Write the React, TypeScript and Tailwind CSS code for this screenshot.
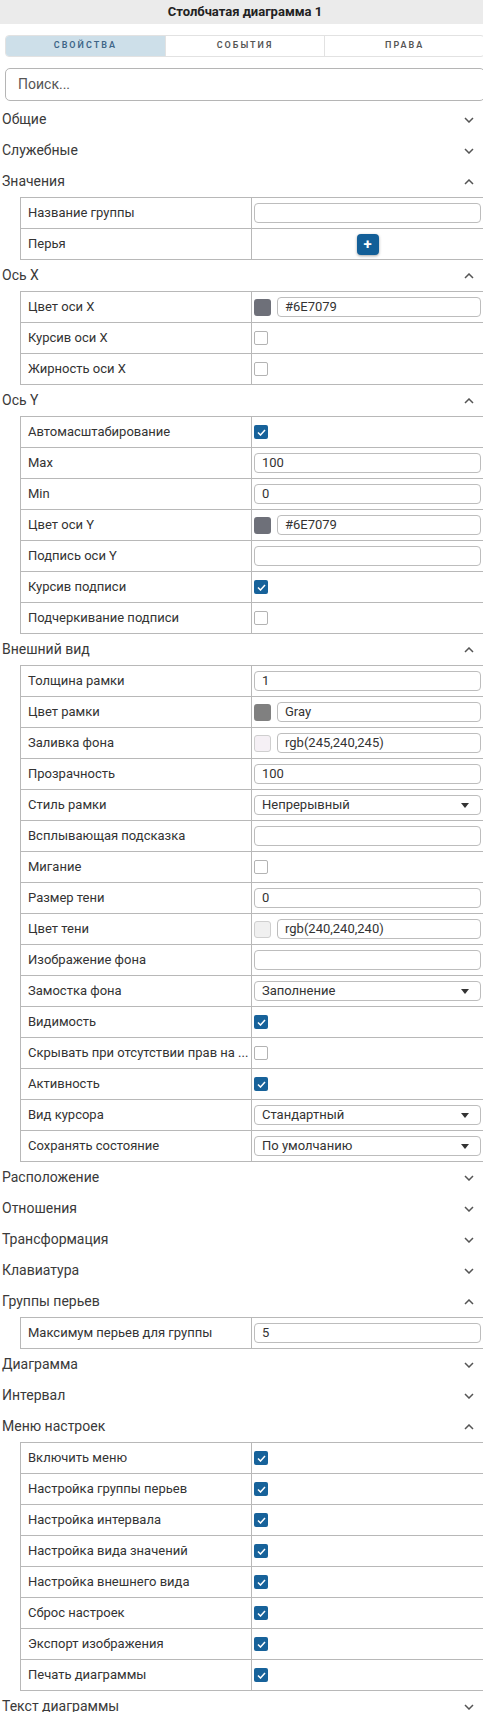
import { ReactNode } from 'react';

type Row =
  | { label: string; kind: 'input'; value?: string }
  | { label: string; kind: 'color'; value: string; swatch: string; light?: boolean }
  | { label: string; kind: 'check'; checked: boolean }
  | { label: string; kind: 'select'; value: string }
  | { label: string; kind: 'add' };

type Section = { title: string; rows?: Row[] };

const sections: Section[] = [
  { title: 'Общие' },
  { title: 'Служебные' },
  {
    title: 'Значения',
    rows: [
      { label: 'Название группы', kind: 'input' },
      { label: 'Перья', kind: 'add' },
    ],
  },
  {
    title: 'Ось X',
    rows: [
      { label: 'Цвет оси X', kind: 'color', value: '#6E7079', swatch: '#6E7079' },
      { label: 'Курсив оси X', kind: 'check', checked: false },
      { label: 'Жирность оси X', kind: 'check', checked: false },
    ],
  },
  {
    title: 'Ось Y',
    rows: [
      { label: 'Автомасштабирование', kind: 'check', checked: true },
      { label: 'Max', kind: 'input', value: '100' },
      { label: 'Min', kind: 'input', value: '0' },
      { label: 'Цвет оси Y', kind: 'color', value: '#6E7079', swatch: '#6E7079' },
      { label: 'Подпись оси Y', kind: 'input' },
      { label: 'Курсив подписи', kind: 'check', checked: true },
      { label: 'Подчеркивание подписи', kind: 'check', checked: false },
    ],
  },
  {
    title: 'Внешний вид',
    rows: [
      { label: 'Толщина рамки', kind: 'input', value: '1' },
      { label: 'Цвет рамки', kind: 'color', value: 'Gray', swatch: '#808080' },
      { label: 'Заливка фона', kind: 'color', value: 'rgb(245,240,245)', swatch: 'rgb(245,240,245)', light: true },
      { label: 'Прозрачность', kind: 'input', value: '100' },
      { label: 'Стиль рамки', kind: 'select', value: 'Непрерывный' },
      { label: 'Всплывающая подсказка', kind: 'input' },
      { label: 'Мигание', kind: 'check', checked: false },
      { label: 'Размер тени', kind: 'input', value: '0' },
      { label: 'Цвет тени', kind: 'color', value: 'rgb(240,240,240)', swatch: 'rgb(240,240,240)', light: true },
      { label: 'Изображение фона', kind: 'input' },
      { label: 'Замостка фона', kind: 'select', value: 'Заполнение' },
      { label: 'Видимость', kind: 'check', checked: true },
      // label is shortened by the app itself
      { label: 'Скрывать при отсутствии прав на ...', kind: 'check', checked: false },
      { label: 'Активность', kind: 'check', checked: true },
      { label: 'Вид курсора', kind: 'select', value: 'Стандартный' },
      { label: 'Сохранять состояние', kind: 'select', value: 'По умолчанию' },
    ],
  },
  { title: 'Расположение' },
  { title: 'Отношения' },
  { title: 'Трансформация' },
  { title: 'Клавиатура' },
  {
    title: 'Группы перьев',
    rows: [{ label: 'Максимум перьев для группы', kind: 'input', value: '5' }],
  },
  { title: 'Диаграмма' },
  { title: 'Интервал' },
  {
    title: 'Меню настроек',
    rows: [
      { label: 'Включить меню', kind: 'check', checked: true },
      { label: 'Настройка группы перьев', kind: 'check', checked: true },
      { label: 'Настройка интервала', kind: 'check', checked: true },
      { label: 'Настройка вида значений', kind: 'check', checked: true },
      { label: 'Настройка внешнего вида', kind: 'check', checked: true },
      { label: 'Сброс настроек', kind: 'check', checked: true },
      { label: 'Экспорт изображения', kind: 'check', checked: true },
      { label: 'Печать диаграммы', kind: 'check', checked: true },
    ],
  },
  { title: 'Текст диаграммы' },
];

const Chevron = ({ open }: { open: boolean }) => (
  <svg width="10" height="6" viewBox="0 0 10 6" className={open ? 'rotate-180' : ''}>
    <polyline points="1,1 5,5 9,1" fill="none" stroke="#555" strokeWidth="1.5" />
  </svg>
);

const Field = ({ children }: { children?: ReactNode }) => (
  <div className="flex h-[20px] flex-1 items-center rounded-[4px] border border-[#bdbdbd] px-[7px] text-[13px] text-[#333]">
    {children}
  </div>
);

const Checkbox = ({ checked }: { checked: boolean }) =>
  checked ? (
    <div className="flex h-[14px] w-[14px] items-center justify-center rounded-[2px] bg-[#17629a]">
      <svg width="9" height="7" viewBox="0 0 9 7">
        <polyline points="1,3.5 3.5,6 8,1" fill="none" stroke="#fff" strokeWidth="1.5" />
      </svg>
    </div>
  ) : (
    <div className="h-[14px] w-[14px] rounded-[2px] border-[1.5px] border-[#b3b3b3] bg-white" />
  );

const Value = ({ row }: { row: Row }) => {
  switch (row.kind) {
    case 'input':
      return <Field>{row.value}</Field>;
    case 'color':
      return (
        <div className="flex flex-1 items-center gap-[6px]">
          <div
            className={`h-[17px] w-[17px] shrink-0 rounded-[3px] ${row.light ? 'border border-[#cfcfcf]' : ''}`}
            style={{ backgroundColor: row.swatch }}
          />
          <Field>{row.value}</Field>
        </div>
      );
    case 'check':
      return <Checkbox checked={row.checked} />;
    case 'select':
      return (
        <Field>
          <span className="flex-1">{row.value}</span>
          <svg width="8" height="5" viewBox="0 0 8 5" className="mr-[4px]">
            <polygon points="0,0 8,0 4,5" fill="#333" />
          </svg>
        </Field>
      );
    case 'add':
      return (
        <div className="flex flex-1 justify-center">
          <div className="flex h-[21px] w-[22px] items-center justify-center rounded-[4px] bg-[#135f98] text-[15px] font-bold leading-none text-white shadow-[0_1px_3px_rgba(0,0,0,0.35)]">
            +
          </div>
        </div>
      );
  }
};

const PropTable = ({ rows }: { rows: Row[] }) => (
  <div className="ml-[20px] mr-[5px] border-x border-t border-[#b8b8b8]">
    {rows.map((row) => (
      <div key={row.label} className="grid h-[31px] grid-cols-[231px_1fr] border-b border-[#b8b8b8]">
        <div className="flex items-center whitespace-nowrap border-r border-[#b8b8b8] pl-[7px] text-[13px] text-[#333]">
          {row.label}
        </div>
        <div className="flex items-center pl-[2px] pr-[3px]">
          <Value row={row} />
        </div>
      </div>
    ))}
  </div>
);

export default function App() {
  return (
    <div className="w-[483px] overflow-hidden bg-white font-['Roboto',sans-serif]">
      <div className="w-[490px]">
        <div className="flex h-[24px] items-center justify-center bg-[#ebebeb] text-[13px] font-bold text-[#222]">
          Столбчатая диаграмма 1
        </div>

        <div className="mx-[5px] mt-[11px] flex h-[22px] overflow-hidden rounded-[4px] border border-[#e2e2e2] text-[9px] font-semibold tracking-[2px]">
          <div className="flex flex-1 items-center justify-center bg-[#cddfe9] text-[#3d6587]">СВОЙСТВА</div>
          <div className="flex flex-1 items-center justify-center border-l border-[#e2e2e2] text-[#555]">СОБЫТИЯ</div>
          <div className="flex flex-1 items-center justify-center border-l border-[#e2e2e2] text-[#555]">ПРАВА</div>
        </div>

        <div className="mx-[5px] mt-[11px] flex h-[33px] items-center rounded-[5px] border border-[#b5b5b5] px-[12px] text-[14px] text-[#555]">
          Поиск...
        </div>

        <div className="mt-[3px]">
          {sections.map((s) => (
            <div key={s.title}>
              <div className="flex h-[31px] items-center justify-between pl-[2px] pr-[16px] text-[14px] text-[#3a3a3a]">
                <span>{s.title}</span>
                <Chevron open={!!s.rows} />
              </div>
              {s.rows && <PropTable rows={s.rows} />}
            </div>
          ))}
        </div>
      </div>
    </div>
  );
}
